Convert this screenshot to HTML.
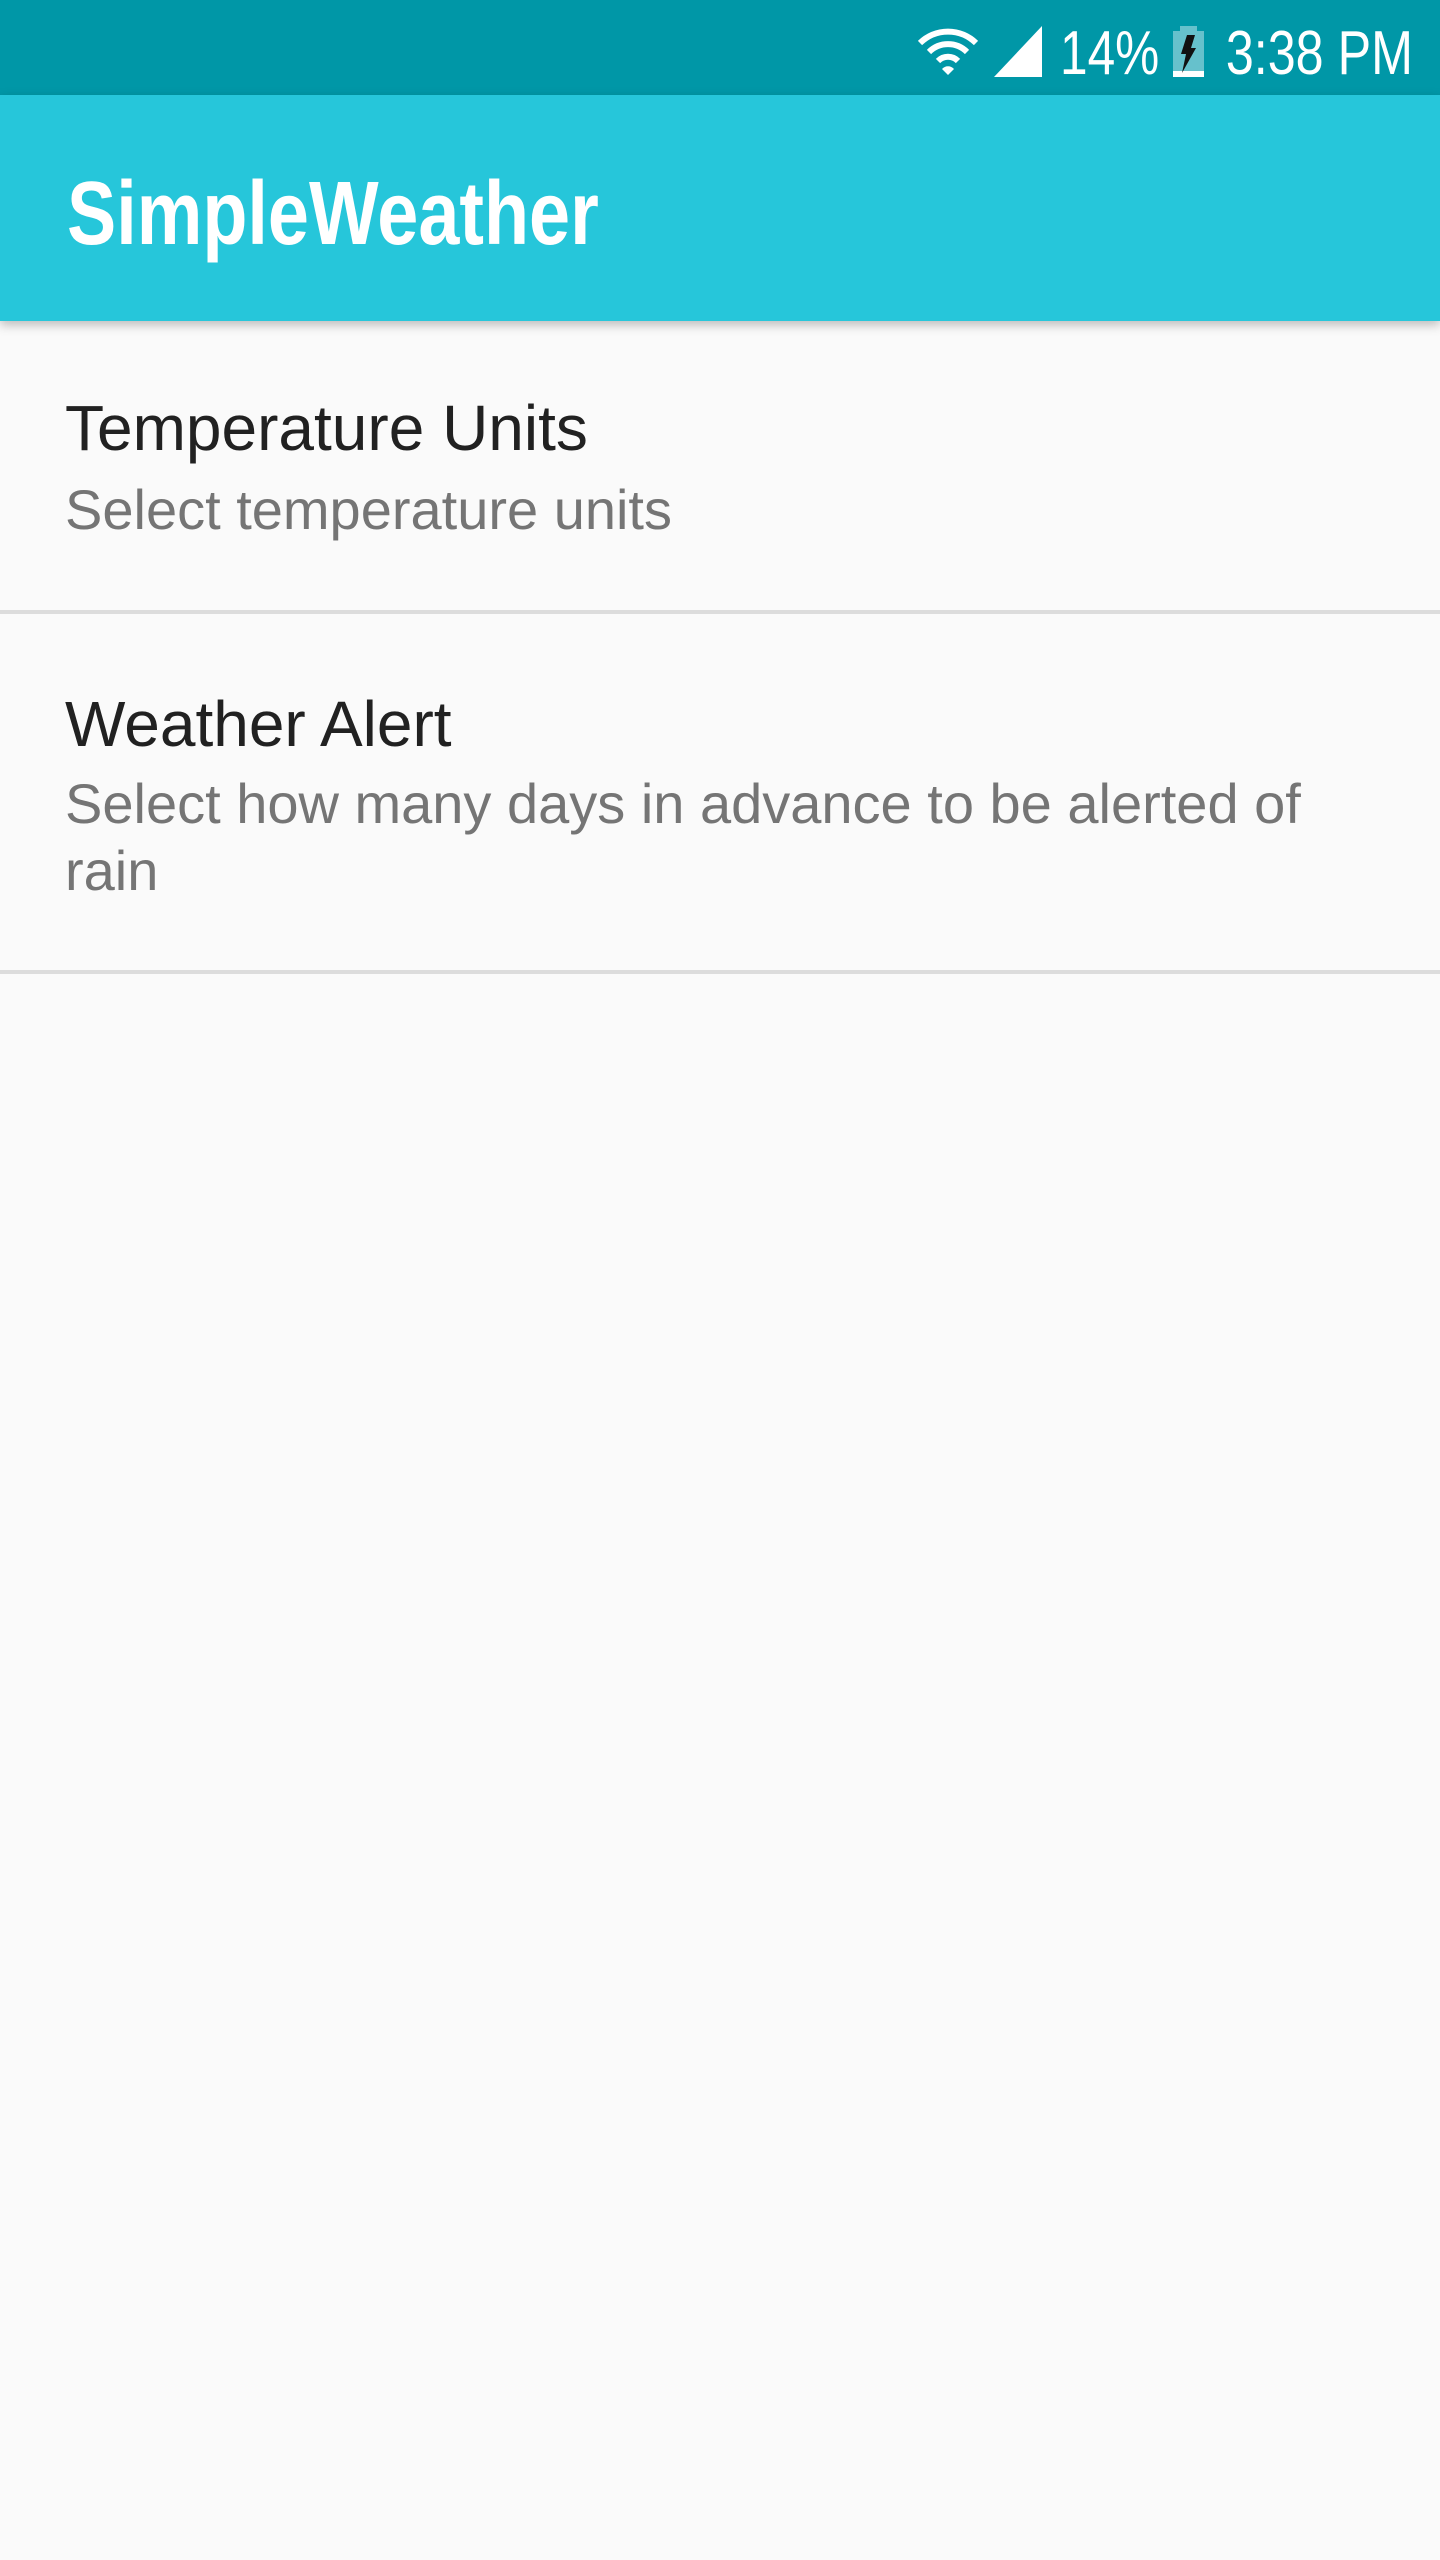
<!DOCTYPE html>
<html><head><meta charset="utf-8"><style>
*{margin:0;padding:0;box-sizing:border-box}
body{width:1440px;height:2560px;background:#fafafa;font-family:"Liberation Sans",sans-serif;position:relative;overflow:hidden}
.sb{position:absolute;left:0;top:0;width:1440px;height:95px;background:#0097a7}
.ab{position:absolute;left:0;top:95px;width:1440px;height:226px;background:#26c6da;box-shadow:0 4px 10px rgba(0,0,0,0.25)}
.t{position:absolute;white-space:nowrap}
.div{position:absolute;left:0;width:1440px;height:4px;background:#dcdcdc}
</style></head><body>
<div class="sb"></div>
<svg style="position:absolute;left:916px;top:24px" width="64" height="54" viewBox="0 0 64 54">
<path d="M4 19 A40 40 0 0 1 60 19" stroke="#fff" stroke-width="6" fill="none"/>
<path d="M13 28 A27 27 0 0 1 51 28" stroke="#fff" stroke-width="6" fill="none"/>
<path d="M22 37 A14 14 0 0 1 42 37" stroke="#fff" stroke-width="6" fill="none"/>
<path d="M26 45 L32 51 L38 45 A8 8 0 0 0 26 45Z" fill="#fff"/>
</svg>
<svg style="position:absolute;left:994px;top:26px" width="48" height="51"><path d="M0 51 L48 0 L48 51Z" fill="#fff"/></svg>
<div class="t" style="left:1060px;top:18px;font-size:62px;color:#fff;transform:scaleX(0.8);transform-origin:left">14%</div>
<svg style="position:absolute;left:1173px;top:26px" width="31" height="51"><rect x="7" y="0" width="17" height="6" fill="#66c1cc"/><rect x="0" y="5" width="31" height="40" fill="#66c1cc"/><rect x="0" y="45" width="31" height="6" fill="#fff"/><path d="M14 9 L22 9 L18 22 L23 22 L9 47 L13 28 L8 28Z" fill="#111"/></svg>
<div class="t" style="right:27px;top:18px;font-size:62px;color:#fff;transform:scaleX(0.81);transform-origin:right">3:38 PM</div>
<div class="ab"></div>
<div class="t" style="left:67px;top:169px;font-size:90px;font-weight:bold;color:#fff;line-height:1;transform:scaleX(0.82);transform-origin:left">SimpleWeather</div>
<div class="t" style="left:65px;top:396px;font-size:64px;color:#212121;line-height:1">Temperature Units</div>
<div class="t" style="left:65px;top:482px;font-size:56px;color:#757575;line-height:1">Select temperature units</div>
<div class="div" style="top:610px"></div>
<div class="t" style="left:65px;top:692px;font-size:64px;color:#212121;line-height:1">Weather Alert</div>
<div class="t" style="left:65px;top:776px;font-size:56px;color:#757575;line-height:1">Select how many days in advance to be alerted of</div>
<div class="t" style="left:65px;top:843px;font-size:56px;color:#757575;line-height:1">rain</div>
<div class="div" style="top:970px"></div>
</body></html>
